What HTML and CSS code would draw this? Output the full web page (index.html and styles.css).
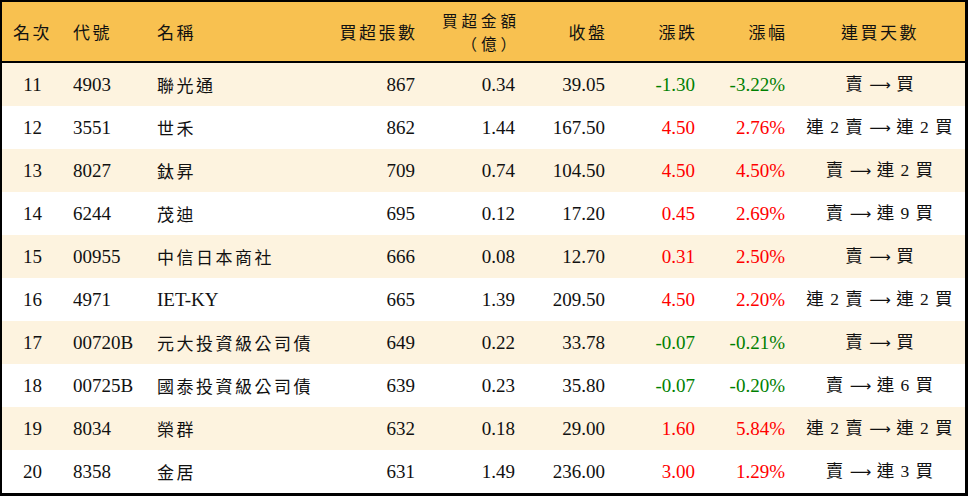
FILE: index.html
```html
<!DOCTYPE html>
<html lang="zh-Hant">
<head>
<meta charset="utf-8">
<title>買超排行</title>
<link rel="stylesheet" href="styles.css">
</head>
<body>
<div class="frame">
<table class="rank">
<colgroup>
<col class="c-rank"><col class="c-code"><col class="c-name"><col class="c-vol"><col class="c-amt"><col class="c-close"><col class="c-chg"><col class="c-pct"><col class="c-days">
</colgroup>
<thead>
<tr>
<th class="center">名次</th>
<th class="left">代號</th>
<th class="left">名稱</th>
<th class="right">買超張數</th>
<th class="right two"><span class="line">買超金額</span><span class="line">（億）</span></th>
<th class="right">收盤</th>
<th class="right">漲跌</th>
<th class="right">漲幅</th>
<th class="center">連買天數</th>
</tr>
</thead>
<tbody>
<tr class="odd"><td class="center">11</td><td class="left">4903</td><td class="left cjk">聯光通</td><td class="right">867</td><td class="right">0.34</td><td class="right">39.05</td><td class="right down">-1.30</td><td class="right down">-3.22%</td><td class="center days">賣 <span class="arrow">⟶</span> 買</td></tr>
<tr><td class="center">12</td><td class="left">3551</td><td class="left cjk">世禾</td><td class="right">862</td><td class="right">1.44</td><td class="right">167.50</td><td class="right up">4.50</td><td class="right up">2.76%</td><td class="center days">連 2 賣 <span class="arrow">⟶</span> 連 2 買</td></tr>
<tr class="odd"><td class="center">13</td><td class="left">8027</td><td class="left cjk">鈦昇</td><td class="right">709</td><td class="right">0.74</td><td class="right">104.50</td><td class="right up">4.50</td><td class="right up">4.50%</td><td class="center days">賣 <span class="arrow">⟶</span> 連 2 買</td></tr>
<tr><td class="center">14</td><td class="left">6244</td><td class="left cjk">茂迪</td><td class="right">695</td><td class="right">0.12</td><td class="right">17.20</td><td class="right up">0.45</td><td class="right up">2.69%</td><td class="center days">賣 <span class="arrow">⟶</span> 連 9 買</td></tr>
<tr class="odd"><td class="center">15</td><td class="left">00955</td><td class="left cjk">中信日本商社</td><td class="right">666</td><td class="right">0.08</td><td class="right">12.70</td><td class="right up">0.31</td><td class="right up">2.50%</td><td class="center days">賣 <span class="arrow">⟶</span> 買</td></tr>
<tr><td class="center">16</td><td class="left">4971</td><td class="left">IET-KY</td><td class="right">665</td><td class="right">1.39</td><td class="right">209.50</td><td class="right up">4.50</td><td class="right up">2.20%</td><td class="center days">連 2 賣 <span class="arrow">⟶</span> 連 2 買</td></tr>
<tr class="odd"><td class="center">17</td><td class="left">00720B</td><td class="left cjk">元大投資級公司債</td><td class="right">649</td><td class="right">0.22</td><td class="right">33.78</td><td class="right down">-0.07</td><td class="right down">-0.21%</td><td class="center days">賣 <span class="arrow">⟶</span> 買</td></tr>
<tr><td class="center">18</td><td class="left">00725B</td><td class="left cjk">國泰投資級公司債</td><td class="right">639</td><td class="right">0.23</td><td class="right">35.80</td><td class="right down">-0.07</td><td class="right down">-0.20%</td><td class="center days">賣 <span class="arrow">⟶</span> 連 6 買</td></tr>
<tr class="odd"><td class="center">19</td><td class="left">8034</td><td class="left cjk">榮群</td><td class="right">632</td><td class="right">0.18</td><td class="right">29.00</td><td class="right up">1.60</td><td class="right up">5.84%</td><td class="center days">連 2 賣 <span class="arrow">⟶</span> 連 2 買</td></tr>
<tr><td class="center">20</td><td class="left">8358</td><td class="left cjk">金居</td><td class="right">631</td><td class="right">1.49</td><td class="right">236.00</td><td class="right up">3.00</td><td class="right up">1.29%</td><td class="center days">賣 <span class="arrow">⟶</span> 連 3 買</td></tr>
</tbody>
</table>
</div>
</body>
</html>
```

FILE: styles.css
```css
html, body {
  margin: 0;
  padding: 0;
  background: #ffffff;
}

.frame {
  width: 968px;
  height: 496px;
  box-sizing: border-box;
  border: 2px solid #000;
  border-right-width: 3px;
  border-bottom-width: 3px;
  overflow: hidden;
}

.rank {
  width: 963px;
  table-layout: fixed;
  border-collapse: separate;
  border-spacing: 0;
  font-family: "Liberation Serif", "Noto Sans CJK TC", serif;
  font-size: 19px;
  color: #111;
}

.c-rank { width: 61px; }
.c-code { width: 84px; }
.c-name { width: 178px; }
.c-vol { width: 100px; }
.c-amt { width: 100px; }
.c-close { width: 90px; }
.c-chg { width: 90px; }
.c-pct { width: 90px; }
.c-days { width: 170px; }

.rank thead tr {
  height: 61px;
  background: #f8c150;
}

.rank th {
  font-family: "Noto Sans CJK TC", sans-serif;
  font-weight: normal;
  font-size: 17px;
  letter-spacing: 2.5px;
  line-height: 21px;
  padding: 0;
  border-bottom: 2px solid #000;
  vertical-align: middle;
  white-space: nowrap;
}

.rank th.two {
  font-size: 15.5px;
  letter-spacing: 4px;
  padding-right: 5px !important;
}

.rank th.two .line {
  display: block;
  line-height: 23px;
}

.rank tbody tr {
  height: 43px;
}

.rank tbody tr.odd {
  background: #fdf3df;
}

.rank td {
  padding: 0;
  vertical-align: middle;
  white-space: nowrap;
  line-height: 22px;
}

.left { text-align: left; padding-left: 10px !important; }
.right { text-align: right; padding-right: 10px !important; }
th.right { padding-right: 7.5px !important; }
.center { text-align: center; }

.cjk {
  font-family: "Noto Sans CJK TC", sans-serif;
  font-size: 17px;
  letter-spacing: 2.5px;
}

.days {
  font-size: 17.5px;
  letter-spacing: 1px;
}

.arrow {
  font-family: "DejaVu Sans", sans-serif;
  font-size: 15px;
  letter-spacing: 0;
}

.up { color: #ff0000; }
.down { color: #008000; }
```
